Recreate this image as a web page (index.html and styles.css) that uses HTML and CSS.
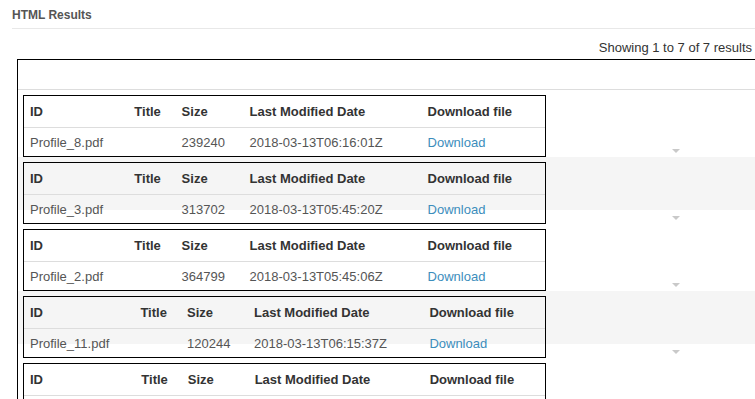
FILE: index.html
```html
<!DOCTYPE html>
<html>
<head>
<meta charset="utf-8">
<link rel="stylesheet" href="styles.css">
</head>
<body>
<div class="page">
  <div class="box-header">HTML Results</div>
  <div class="info">Showing 1 to 7 of 7 results</div>
  <div class="results">
    <div class="results-head"></div>

    <div class="row">
      <table class="file">
        <thead><tr><th>ID</th><th>Title</th><th>Size</th><th>Last Modified Date</th><th>Download file</th></tr></thead>
        <tbody><tr><td>Profile_8.pdf</td><td></td><td>239240</td><td>2018-03-13T06:16:01Z</td><td><a href="#">Download</a></td></tr></tbody>
      </table>
      <span class="caret"></span>
    </div>

    <div class="row even">
      <table class="file">
        <thead><tr><th>ID</th><th>Title</th><th>Size</th><th>Last Modified Date</th><th>Download file</th></tr></thead>
        <tbody><tr><td>Profile_3.pdf</td><td></td><td>313702</td><td>2018-03-13T05:45:20Z</td><td><a href="#">Download</a></td></tr></tbody>
      </table>
      <span class="caret"></span>
    </div>

    <div class="row">
      <table class="file">
        <thead><tr><th>ID</th><th>Title</th><th>Size</th><th>Last Modified Date</th><th>Download file</th></tr></thead>
        <tbody><tr><td>Profile_2.pdf</td><td></td><td>364799</td><td>2018-03-13T05:45:06Z</td><td><a href="#">Download</a></td></tr></tbody>
      </table>
      <span class="caret"></span>
    </div>

    <div class="row even">
      <table class="file">
        <thead><tr><th>ID</th><th>Title</th><th>Size</th><th>Last Modified Date</th><th>Download file</th></tr></thead>
        <tbody><tr><td>Profile_11.pdf</td><td></td><td>120244</td><td>2018-03-13T06:15:37Z</td><td><a href="#">Download</a></td></tr></tbody>
      </table>
      <span class="caret"></span>
    </div>

    <div class="row">
      <table class="file">
        <thead><tr><th>ID</th><th>Title</th><th>Size</th><th>Last Modified Date</th><th>Download file</th></tr></thead>
        <tbody><tr><td>Profile_10.pdf</td><td></td><td>287514</td><td>2018-03-13T06:15:52Z</td><td><a href="#">Download</a></td></tr></tbody>
      </table>
      <span class="caret"></span>
    </div>
  </div>
</div>
</body>
</html>
```

FILE: styles.css
```css
html, body {
  margin: 0;
  padding: 0;
  background: #fff;
}

.page {
  height: 399px;
  overflow: hidden;
  font-family: "Liberation Sans", Arial, sans-serif;
  color: #333;
}

.box-header {
  margin-left: 12px;
  padding: 7px 0 5px;
  font-size: 12px;
  line-height: 16px;
  font-weight: bold;
  color: #555;
  border-bottom: 1px solid #e8e8e8;
}

.info {
  margin: 10px 0 2px;
  padding-right: 3px;
  text-align: right;
  font-size: 13px;
  line-height: 18px;
  color: #333;
}

.results {
  margin-left: 17px;
  border-top: 1px solid #000;
  border-left: 1px solid #000;
}

.results-head {
  height: 29px;
  border-bottom: 1px solid #ddd;
}

.row {
  display: flex;
  align-items: flex-start;
  height: 67px;
}

.row.even {
  background: linear-gradient(to bottom, #f5f5f5 0, #f5f5f5 53px, transparent 53px);
}

.file {
  margin: 5px 0 0 5px;
  width: 523px;
  border: 1px solid #000;
  border-collapse: separate;
  border-spacing: 0;
  font-size: 13px;
  flex: none;
}

.file th {
  text-align: left;
  font-weight: bold;
  color: #333;
  padding: 6px;
  line-height: 19px;
  border-bottom: 1px solid #ddd;
  white-space: nowrap;
}

.file th:last-child {
  padding-right: 10px;
}

.file td {
  color: #555;
  padding: 6px 6px 4px;
  line-height: 18px;
  white-space: nowrap;
}

.file a {
  color: #3c8dbc;
  text-decoration: none;
}

.caret {
  flex: none;
  margin: 59px 0 0 126px;
  width: 0;
  height: 0;
  border-left: 4px solid transparent;
  border-right: 4px solid transparent;
  border-top: 4px solid #c9c9c9;
}
```
